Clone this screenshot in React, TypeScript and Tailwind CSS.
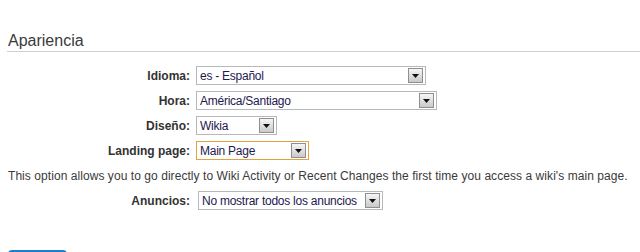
import React from "react";

function Arrow() {
  return (
    <span className="flex h-[15px] w-[15px] shrink-0 items-center justify-center border border-[#8f8f8f] bg-gradient-to-b from-[#f6f6f6] to-[#c9c9c9]">
      <svg width="7" height="4" viewBox="0 0 7 4">
        <path d="M0 0 H7 L3.5 4 Z" fill="#111" />
      </svg>
    </span>
  );
}

function Sel({ text, w, focus }: { text: string; w: string; focus?: boolean }) {
  return (
    <div
      className={`flex h-[19px] items-center justify-between border bg-white pl-[3px] pr-[2px] ${w} ${
        focus ? "border-[#e3a23f]" : "border-[#b4b9bd]"
      }`}
    >
      <span className="whitespace-nowrap text-[12px] leading-[14px] tracking-[-0.25px] text-[#24184f]">{text}</span>
      <Arrow />
    </div>
  );
}

function Row({ label, children, gap = "gap-[6px]" }: { label: string; children: React.ReactNode; gap?: string }) {
  return (
    <div className={`flex h-[25px] items-center ${gap}`}>
      <div className="w-[190px] text-right text-[12px] font-bold leading-[14px] text-[#333]">{label}</div>
      {children}
    </div>
  );
}

export default function App() {
  return (
    <div className="h-[252px] w-[640px] overflow-hidden bg-white font-['Liberation_Sans',Arial,sans-serif]">
      <div className="pt-[31px]">
        <h2 className="ml-[7px] border-b border-[#cfcfcf] pb-[1px] pl-[1px] text-[16px] leading-[19px] text-[#3a3a3a]">
          Apariencia
        </h2>
      </div>
      <div className="pt-[11px]">
        <Row label="Idioma:">
          <Sel text="es - Español" w="w-[230px]" />
        </Row>
        <Row label="Hora:">
          <Sel text="América/Santiago" w="w-[241px]" />
        </Row>
        <Row label="Diseño:">
          <Sel text="Wikia" w="w-[81px]" />
        </Row>
        <Row label="Landing page:">
          <Sel text="Main Page" w="w-[113px]" focus />
        </Row>
        <div className="flex h-[25px] items-center whitespace-nowrap pl-[8px] text-[12px] leading-[14px] tracking-[0.06px] text-[#3a3a3a]">
          This option allows you to go directly to Wiki Activity or Recent Changes the first time you access a wiki's main page.
        </div>
        <Row label="Anuncios:" gap="gap-[8px]">
          <Sel text="No mostrar todos los anuncios" w="w-[185px]" />
        </Row>
      </div>
      <div className="ml-[8px] mt-[37px] h-[25px] w-[59px] rounded-t-[4px] bg-[#1b7fd0]" />
    </div>
  );
}
